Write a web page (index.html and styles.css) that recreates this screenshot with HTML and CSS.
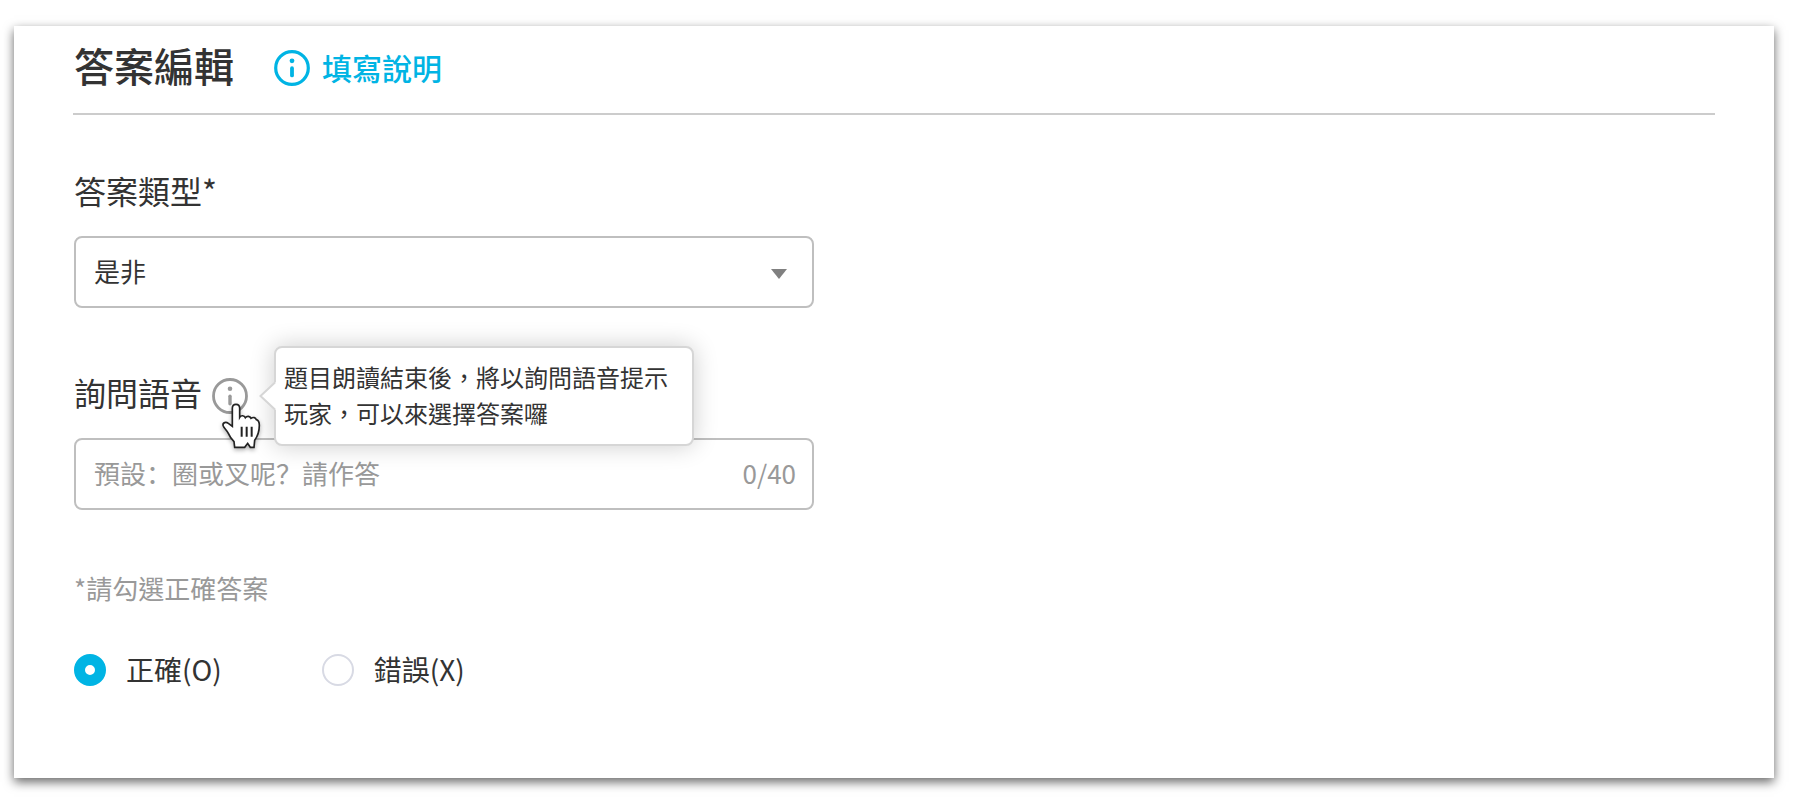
FILE: index.html
```html
<!DOCTYPE html>
<html lang="zh-Hant">
<head>
<meta charset="utf-8">
<meta name="viewport" content="width=device-width, initial-scale=1">
<title>答案編輯</title>
<link rel="stylesheet" href="styles.css">
</head>
<body>
<main class="card">
  <header class="card-header">
    <h1 class="title">答案編輯</h1>
    <a class="help-link" href="#">
      <svg class="info-icon" viewBox="0 0 36 36" aria-hidden="true">
        <circle cx="18" cy="18" r="16.3" fill="none" stroke="currentColor" stroke-width="3.2"/>
        <circle cx="18" cy="10.8" r="2.4" fill="currentColor"/>
        <path d="M18 18.2v7.2" stroke="currentColor" stroke-width="3.8" stroke-linecap="round"/>
      </svg>
      <span class="help-text">填寫說明</span>
    </a>
  </header>

  <form class="form">
    <section class="field">
      <label class="label" for="answer-type">答案類型*</label>
      <div class="control">
        <select class="select" id="answer-type">
          <option>是非</option>
        </select>
        <svg class="caret" viewBox="0 0 16 10" aria-hidden="true"><path d="M0 0h16L8 10z" fill="currentColor"/></svg>
      </div>
    </section>

    <section class="field">
      <div class="label-row">
        <label class="label" for="prompt-voice">詢問語音</label>
        <div class="hint-anchor">
          <button class="info-button" type="button" aria-label="說明" aria-describedby="voice-tip">
            <svg class="info-icon" viewBox="0 0 36 36" aria-hidden="true">
              <circle cx="18" cy="18" r="16.5" fill="none" stroke="currentColor" stroke-width="2.8"/>
              <circle cx="18" cy="10.8" r="2.3" fill="currentColor"/>
              <path d="M18 18.2v7.6" stroke="currentColor" stroke-width="3.4" stroke-linecap="round"/>
            </svg>
          </button>
          <div class="tooltip" id="voice-tip" role="tooltip">
            <svg class="tooltip-arrow" viewBox="0 0 17 30" aria-hidden="true">
              <path d="M17 1L1.500 15L17 29z" fill="#fff"/>
              <path d="M16 1.500L1.500 15L16 28.500" fill="none" stroke="#d6d6d6" stroke-width="2"/>
            </svg>
            題目朗讀結束後，將以詢問語音提示玩家，可以來選擇答案囉
          </div>
          <svg class="pointer" viewBox="90 126 126 144" aria-hidden="true">
            <path d="M127 199V145C127 129 149 129 149 145V172C153 165 163 166 166 173C171 167 180 168 183 175C190 170 197 173 199 179C206 181 208 188 208 196C208 216 205 226 194 241L192 262H181L173 250L164 262H134L132 245C124 237 119 229 115 220C111 211 101 204 99 196C98 187 108 185 115 190Z" fill="#fff" stroke="#222" stroke-width="5"/>
            <path d="M155 200v30M170 200v30M185 200v30" stroke="#222" stroke-width="6"/>
          </svg>
        </div>
      </div>
      <div class="control">
        <input class="input" id="prompt-voice" type="text" lang="zh-Hans" maxlength="40" placeholder="預設：圈或叉呢？請作答">
        <span class="counter">0/40</span>
      </div>
    </section>

    <fieldset class="answers">
      <legend class="legend">*請勾選正確答案</legend>
      <div class="options">
        <label class="option"><input class="radio" type="radio" name="answer" checked><span class="option-text">正確(O)</span></label>
        <label class="option"><input class="radio" type="radio" name="answer"><span class="option-text">錯誤(X)</span></label>
      </div>
    </fieldset>
  </form>
</main>
</body>
</html>
```
FILE: styles.css
```css
* {
  box-sizing: border-box;
}

body {
  margin: 0;
  padding: 26px 20px 20px 14px;
  background: #fff;
  color: #333;
  font-family: "Noto Sans CJK TC", sans-serif;
}

.card {
  padding: 12px 59px 87px;
  background: #fff;
  box-shadow: 0 4px 10px rgba(0, 0, 0, 0.6);
}

.card-header {
  display: flex;
  align-items: center;
  gap: 40px;
  padding-bottom: 15px;
  border-bottom: 2px solid #ccc;
}

.title {
  margin: 0;
  padding: 0 0 6px 1px;
  font-size: 40px;
  font-weight: 500;
  line-height: 54px;
}

.help-link {
  display: flex;
  align-items: center;
  gap: 12px;
  color: #00b4e4;
  font-size: 30px;
  font-weight: 500;
  line-height: 44px;
  text-decoration: none;
}

.help-text {
  padding-bottom: 2px;
}

.info-icon {
  display: block;
  width: 36px;
  height: 36px;
}

.form {
  display: grid;
  gap: 62px;
  max-width: 741px;
  padding: 53px 0 0 1px;
}

.field {
  display: grid;
  gap: 24px;
}

.label {
  font-size: 32px;
  line-height: 44px;
}

.label-row {
  display: flex;
  align-items: flex-end;
  gap: 10px;
}

.control {
  position: relative;
  display: flex;
  align-items: center;
  height: 72px;
  border: 2px solid #bfbfbf;
  border-radius: 8px;
}

.select,
.input {
  flex: 1;
  min-width: 0;
  height: 100%;
  padding: 0 18px 4px;
  border: 0;
  outline: 0;
  background: transparent;
  color: #333;
  font: 26px "Noto Sans CJK TC", sans-serif;
  appearance: none;
}

.input {
  font-family: "Noto Sans CJK SC", sans-serif;
}

.input::placeholder {
  color: #999;
  opacity: 1;
}

.caret {
  position: absolute;
  top: 31px;
  right: 25px;
  width: 16px;
  height: 10px;
  color: #808080;
  pointer-events: none;
}

.counter {
  padding: 0 16px 4px 0;
  color: #999;
  font-size: 26px;
}

.hint-anchor {
  position: relative;
}

.info-button {
  display: block;
  padding: 0;
  border: 0;
  background: none;
  color: #999;
}

.tooltip {
  position: absolute;
  z-index: 1;
  top: -32px;
  left: 62px;
  width: 420px;
  padding: 11px 8px 13px;
  border: 2px solid #d6d6d6;
  border-radius: 8px;
  background: #fff;
  box-shadow: 0 0 24px rgba(0, 0, 0, 0.2);
  font-size: 24px;
  line-height: 36px;
}

.tooltip-arrow {
  position: absolute;
  top: 33px;
  left: -17px;
  width: 17px;
  height: 30px;
}

.pointer {
  position: absolute;
  z-index: 2;
  top: 24px;
  left: 8px;
  width: 42px;
  height: 48px;
  filter: drop-shadow(0 2px 2px rgba(0, 0, 0, 0.3));
}

.answers {
  min-width: 0;
  margin: 0;
  padding: 0;
  border: 0;
}

.legend {
  padding: 0;
  color: #999;
  font-size: 26px;
  line-height: 32px;
}

.options {
  display: flex;
  gap: 100px;
  padding-top: 45px;
}

.option {
  display: flex;
  align-items: center;
  gap: 20px;
  font-size: 28px;
  line-height: 40px;
}

.option-text {
  padding-bottom: 2px;
}

.radio {
  width: 32px;
  height: 32px;
  margin: 0;
  border: 2px solid #d8dae4;
  border-radius: 50%;
  background: #fff;
  appearance: none;
}

.radio:checked {
  border: 11px solid #00b4e4;
}
```
